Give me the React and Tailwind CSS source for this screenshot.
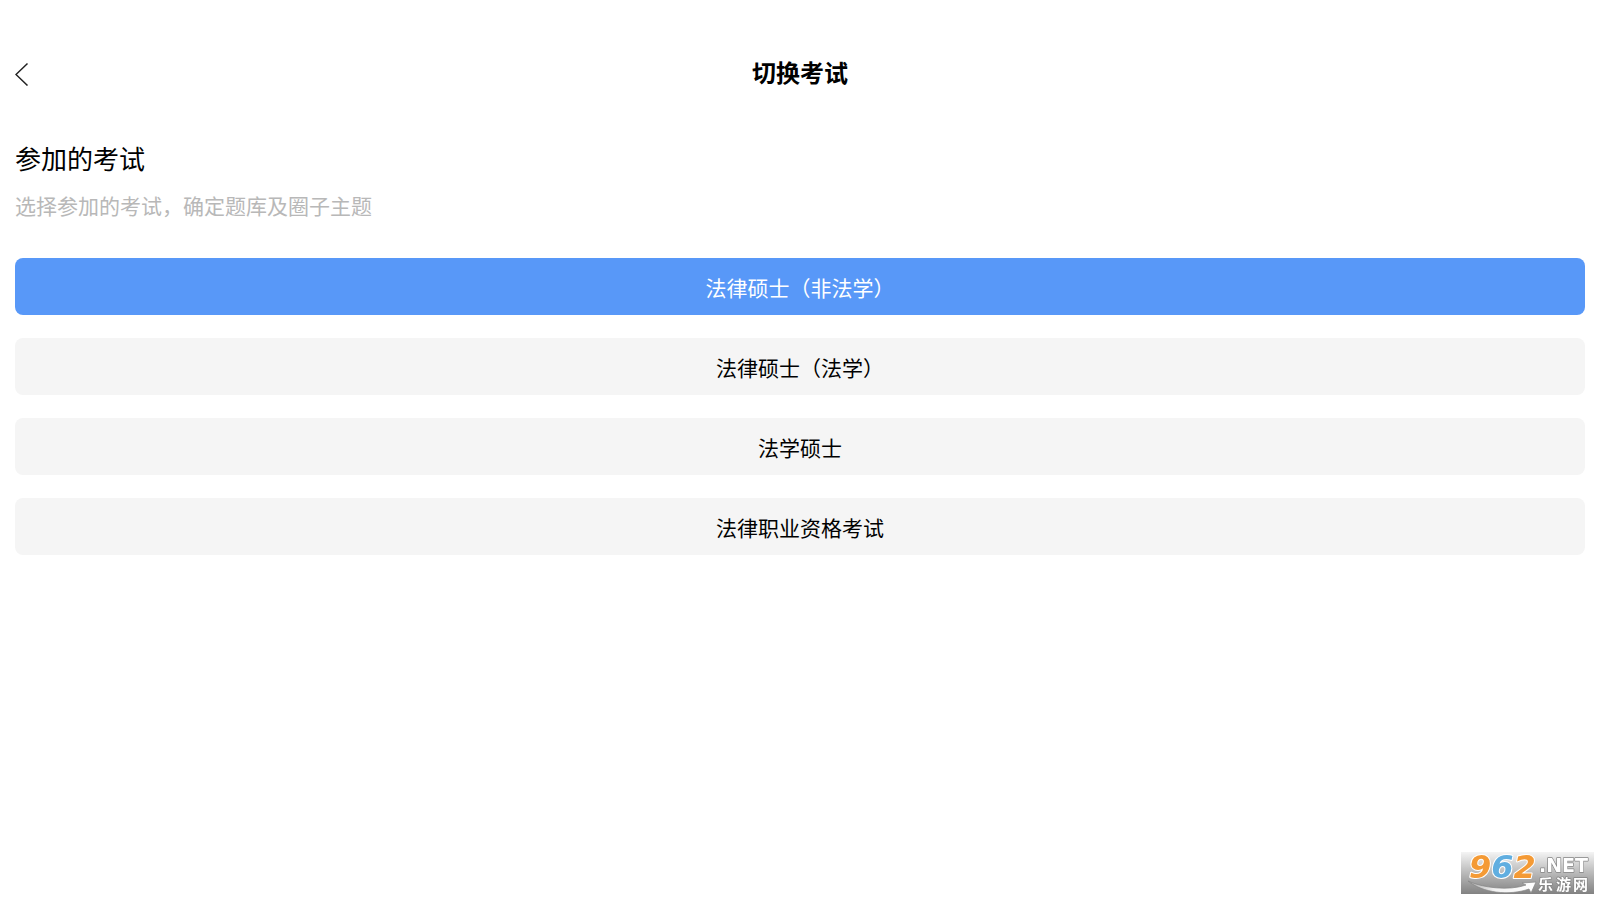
import { useState } from "react";
import clsx from "clsx";

const exams = [
  { id: 1, name: "法律硕士（非法学）" },
  { id: 2, name: "法律硕士（法学）" },
  { id: 3, name: "法学硕士" },
  { id: 4, name: "法律职业资格考试" },
];

function SiteBadge() {
  return (
    <svg
      className="fixed bottom-1.5 right-1.5 overflow-visible"
      width="133"
      height="42"
      viewBox="0 0 133 42"
      role="img"
      aria-label="962.NET 乐游网"
    >
      <defs>
        <linearGradient id="badge-bg" x1="0" y1="0" x2="0" y2="1">
          <stop offset="0" stopColor="#f4f4f4" />
          <stop offset="0.5" stopColor="#b9b9b9" />
          <stop offset="1" stopColor="#828282" />
        </linearGradient>
        <linearGradient id="badge-swoosh" x1="0" y1="0" x2="1" y2="0">
          <stop offset="0" stopColor="#aaaaaa" />
          <stop offset="0.4" stopColor="#f2f2f2" />
          <stop offset="1" stopColor="#ffffff" />
        </linearGradient>
      </defs>
      <rect width="133" height="42" fill="url(#badge-bg)" />
      {/* smile arrow under the digits */}
      <path
        d="M7 29C22 36 48 39 65 33L61 31L75 30L70 41L68 37C48 44 22 41 7 29Z"
        fill="url(#badge-swoosh)"
        stroke="#858585"
        strokeWidth="0.7"
      />
      <g
        fontFamily="'DejaVu Sans', sans-serif"
        fontWeight="bold"
        fontStyle="italic"
        fontSize="32"
        stroke="#ffffff"
        strokeWidth="2"
        strokeLinejoin="round"
        paintOrder="stroke"
      >
        <text x="8" y="26">
          <tspan fill="#f49a35">9</tspan>
          <tspan fill="#60aee0">6</tspan>
          <tspan fill="#f49a35">2</tspan>
        </text>
      </g>
      <g
        fill="#ffffff"
        stroke="#858585"
        strokeWidth="1.4"
        strokeLinejoin="round"
        paintOrder="stroke"
        fontWeight="bold"
      >
        <text x="78" y="20" fontFamily="'DejaVu Sans', sans-serif" fontSize="19">.NET</text>
        <text x="77 95 112" y="38" fontFamily="'Noto Sans CJK SC', sans-serif" fontSize="15">乐游网</text>
      </g>
    </svg>
  );
}

export default function SwitchExam() {
  const [selected, setSelected] = useState(1);

  return (
    <div className="min-h-screen bg-white px-[15px] pt-12 text-black font-['Noto_Sans_CJK_SC',sans-serif]">
      {/* Header */}
      <header className="grid grid-cols-[1fr_auto_1fr] items-center h-[52px]">
        <button aria-label="返回" className="w-6 h-6 cursor-pointer">
          <svg width="14" height="24" viewBox="0 0 14 24" fill="none" stroke="#222222" strokeWidth="1.5">
            <path d="M12.5 1.5L1 12.5L12.5 23.5" />
          </svg>
        </button>
        <h1 className="pb-1 text-[24px] leading-8 font-bold">切换考试</h1>
      </header>

      <main className="pt-10">
        <h2 className="text-[26px] leading-9">参加的考试</h2>
        <p className="mt-[13px] text-[21px] leading-8 text-[#b8b8b8]">选择参加的考试，确定题库及圈子主题</p>

        {/* Exam list */}
        <div className="mt-[37px] flex flex-col gap-[23px]">
          {exams.map((exam) => (
            <button
              key={exam.id}
              aria-pressed={selected === exam.id}
              onClick={() => setSelected(exam.id)}
              className={clsx(
                "w-full h-[57px] rounded-lg text-[21px] leading-8 cursor-pointer",
                selected === exam.id ? "bg-[#5898f8] text-white" : "bg-[#f5f5f5] text-black"
              )}
            >
              {exam.name}
            </button>
          ))}
        </div>
      </main>

      <SiteBadge />
    </div>
  );
}
